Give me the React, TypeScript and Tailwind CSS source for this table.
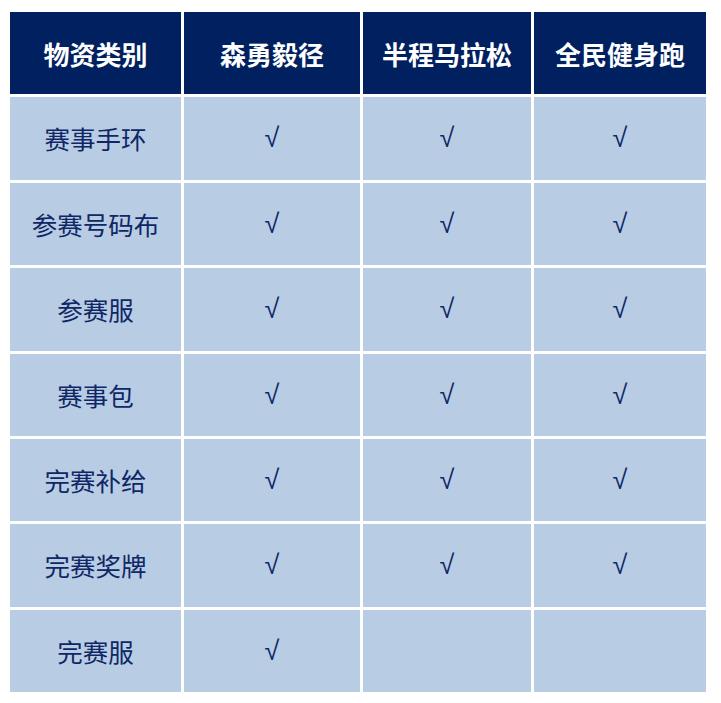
import React from "react";

const headers = ["物资类别", "森勇毅径", "半程马拉松", "全民健身跑"];
const rows: [string, boolean, boolean, boolean][] = [
  ["赛事手环", true, true, true],
  ["参赛号码布", true, true, true],
  ["参赛服", true, true, true],
  ["赛事包", true, true, true],
  ["完赛补给", true, true, true],
  ["完赛奖牌", true, true, true],
  ["完赛服", true, false, false],
];

export default function App() {
  return (
    <div className="w-[721px] h-[703px] bg-white pl-[10px] pt-[12px]">
      <div
        className="grid grid-cols-[171px_176px_168px_172px] auto-rows-[82.4px] gap-[3px] w-fit"
        style={{ fontFamily: '"Noto Sans CJK SC", "Noto Sans", sans-serif' }}
      >
        {headers.map((h) => (
          <div
            key={h}
            className="bg-[#002060] text-white font-bold text-[26px] flex items-center justify-center"
          >
            {h}
          </div>
        ))}
        {rows.map(([name, a, b, c]) => (
          <React.Fragment key={name}>
            <div className="bg-[#b8cce4] text-[#0f2766] text-[25.5px] flex items-center justify-center">
              {name}
            </div>
            {[a, b, c].map((v, i) => (
              <div
                key={i}
                className="bg-[#b8cce4] text-[#0f2766] text-[27px] flex items-center justify-center"
                style={{ fontFamily: '"Liberation Sans", Arial, sans-serif' }}
              >
                {v ? "√" : ""}
              </div>
            ))}
          </React.Fragment>
        ))}
      </div>
    </div>
  );
}
